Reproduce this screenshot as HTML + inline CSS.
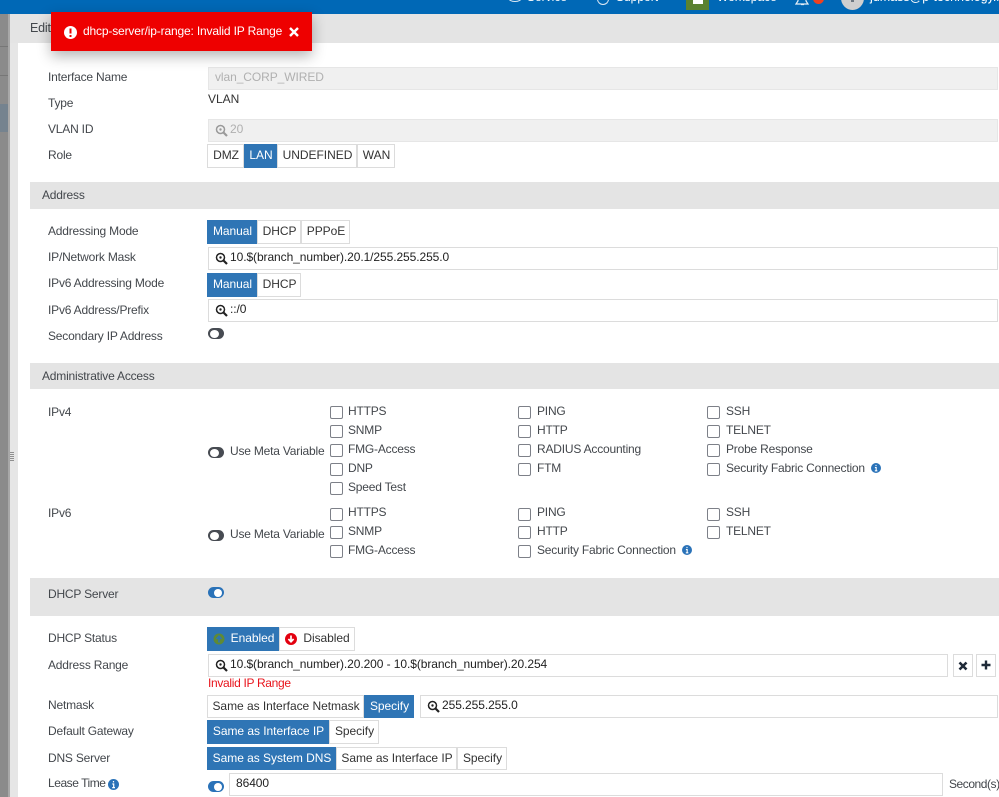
<!DOCTYPE html>
<html lang="en"><head><meta charset="utf-8"><title>Edit Interface</title>
<style>
html,body{margin:0;padding:0;background:#fff}
body{width:999px;height:797px;position:relative;overflow:hidden;font-family:"Liberation Sans",sans-serif;font-size:12px;color:#3c3f44}
div,span,svg{position:absolute;box-sizing:border-box}
.t{height:16px;line-height:16px;white-space:nowrap;letter-spacing:-.2px;color:#43474c}
.bar{left:30px;width:969px;background:#e4e4e4}
.in{border:1px solid #dcdcdc;background:#fff;height:23px;line-height:19px;white-space:nowrap;color:#222;padding-left:21px;letter-spacing:-.08px}
.in.d{background:#f0f0f0;border-color:#e6e6e6;color:#b0b0b0}
.b{height:24px;line-height:21px;text-align:center;border:1px solid #dcdcdc;background:#fff;color:#333;white-space:nowrap;padding-left:1px;letter-spacing:-.04px}
.b.on{background:#2f75b5;border-color:#2f75b5;color:#fff}
.c{width:13px;height:13px;border:1px solid #7d8088;border-radius:2px;background:#fff}
.tg{width:16px;height:11px;border-radius:6px;background:#474b52}
.tg:after{content:"";position:absolute;left:2px;top:1.5px;width:9px;height:8px;border-radius:50%;background:#fff}
.tg.on{background:#2a72b8}
.tg.on:after{left:6px;width:8px}
.m{left:6px;top:4px;width:13px;height:13px}
</style></head><body>
<svg width="0" height="0" style="position:absolute"><defs><symbol id="s" viewBox="0 0 13 13"><circle cx="5.5" cy="5.5" r="4" fill="none" stroke="currentColor" stroke-width="1.5"/><path d="M8.5 8.5L12 12" stroke="currentColor" stroke-width="2.2"/><circle cx="5.5" cy="5.5" r="1.2" fill="currentColor"/></symbol></defs></svg>

<!-- background app -->
<div style="left:0;top:14px;width:9px;height:783px;background:#8b8b8b"></div>
<div style="left:0;top:46px;width:9px;height:1px;background:#777"></div>
<div style="left:0;top:75px;width:9px;height:1px;background:#777"></div>
<div style="left:0;top:104px;width:9px;height:28px;background:#75838f"></div>
<div style="left:8px;top:14px;width:2px;height:783px;background:#a8a8a8"></div>
<div style="left:10px;top:14px;width:8px;height:783px;background:#e6e6e6"></div>
<div style="left:10px;top:452px;width:4px;height:10px;background:repeating-linear-gradient(#8f8f8f 0 1px,#e6e6e6 1px 2px)"></div>
<div style="left:18px;top:43px;width:981px;height:754px;background:#fff"></div>
<div style="left:10px;top:14px;width:989px;height:29px;background:#e4e4e4"></div>
<div class="t" style="left:30px;top:20px;font-size:12.5px">Edit</div>

<!-- top bar -->
<div style="left:0;top:0;width:999px;height:14px;background:#0068b6;overflow:hidden;color:#fff">
  <div style="left:508px;top:-6px;width:14px;height:8px;border:1.5px solid #dfeaf5;border-radius:50%"></div>
  <div style="left:527px;top:-10px;color:#fff;white-space:nowrap;line-height:14px">Service</div>
  <div style="left:597px;top:-7px;width:12px;height:12px;border:1.5px solid #dfeaf5;border-top:0;border-radius:50%"></div>
  <div style="left:616px;top:-10px;color:#fff;white-space:nowrap;line-height:14px">Support</div>
  <div style="left:686px;top:0;width:23px;height:10px;background:#5b8230"></div>
  <div style="left:693px;top:0;width:10px;height:4px;background:#fff"></div>
  <div style="left:717px;top:-10px;color:#fff;white-space:nowrap;line-height:14px">Workspace</div>
  <svg style="left:795px;top:-3px" width="15" height="9" viewBox="0 0 15 9"><path d="M3 0V4L1 7H13L11 4V0M6 7.5H9" fill="none" stroke="#e6eff7" stroke-width="1.2"/></svg>
  <div style="left:813px;top:-7px;width:11px;height:11px;border-radius:50%;background:#f0411f"></div>
  <div style="left:841px;top:-14px;width:23px;height:24px;border-radius:50%;background:#cfcfcf"></div>
  <div style="left:851px;top:0;width:3px;height:2px;background:#6d7781"></div>
  <div style="left:870px;top:-10px;color:#fff;white-space:nowrap;line-height:14px;font-size:12.5px">jdmass@p-tecnnology.net</div>
</div>

<!-- section bars -->
<div class="bar" style="top:182px;height:27px"></div>
<div class="bar" style="top:363px;height:26px"></div>
<div class="bar" style="top:578px;height:38px"></div>
<div class="t" style="left:42px;top:187px">Address</div>
<div class="t" style="left:42px;top:368px">Administrative Access</div>

<!-- labels -->
<div class="t" style="left:48px;top:69px">Interface Name</div>
<div class="t" style="left:48px;top:95px">Type</div>
<div class="t" style="left:48px;top:121px">VLAN ID</div>
<div class="t" style="left:48px;top:147px">Role</div>
<div class="t" style="left:48px;top:223px">Addressing Mode</div>
<div class="t" style="left:48px;top:249px">IP/Network Mask</div>
<div class="t" style="left:48px;top:275px">IPv6 Addressing Mode</div>
<div class="t" style="left:48px;top:302px">IPv6 Address/Prefix</div>
<div class="t" style="left:48px;top:328px">Secondary IP Address</div>
<div class="t" style="left:48px;top:404px">IPv4</div>
<div class="t" style="left:48px;top:505px">IPv6</div>
<div class="t" style="left:48px;top:586px">DHCP Server</div>
<div class="t" style="left:48px;top:630px">DHCP Status</div>
<div class="t" style="left:48px;top:657px">Address Range</div>
<div class="t" style="left:48px;top:697px">Netmask</div>
<div class="t" style="left:48px;top:723px">Default Gateway</div>
<div class="t" style="left:48px;top:750px">DNS Server</div>
<div class="t" style="left:48px;top:775px;letter-spacing:-.45px">Lease Time</div>
<svg style="left:108px;top:779px" width="11" height="11" viewBox="0 0 11 11"><circle cx="5.5" cy="5.5" r="5.5" fill="#2a72b8"/><path d="M5.5 2v1.4M4.3 5H5.7V8.5M4.2 8.6H7" stroke="#fff" stroke-width="1.2" fill="none"/></svg>

<!-- general -->
<div class="in d" style="left:208px;top:67px;width:790px;padding-left:6px">vlan_CORP_WIRED</div>
<div style="left:208px;top:91px;line-height:16px;color:#333">VLAN</div>
<div class="in d" style="left:208px;top:119px;width:790px"><svg class="m" style="color:#9a9a9a"><use href="#s"/></svg>20</div>
<div class="b" style="left:207px;top:144px;width:37px">DMZ</div>
<div class="b on" style="left:244px;top:144px;width:33px">LAN</div>
<div class="b" style="left:277px;top:144px;width:80px">UNDEFINED</div>
<div class="b" style="left:357px;top:144px;width:38px">WAN</div>

<!-- address -->
<div class="b on" style="left:207px;top:220px;width:50px">Manual</div>
<div class="b" style="left:257px;top:220px;width:44px">DHCP</div>
<div class="b" style="left:301px;top:220px;width:49px">PPPoE</div>
<div class="in" style="left:208px;top:247px;width:790px"><svg class="m"><use href="#s"/></svg>10.$(branch_number).20.1/255.255.255.0</div>
<div class="b on" style="left:207px;top:273px;width:50px">Manual</div>
<div class="b" style="left:257px;top:273px;width:44px">DHCP</div>
<div class="in" style="left:208px;top:299px;width:790px"><svg class="m"><use href="#s"/></svg>::/0</div>
<div class="tg" style="left:208px;top:328px"></div>

<!-- admin access IPv4 -->
<div class="tg" style="left:208px;top:447px"></div>
<div class="t" style="left:230px;top:443px">Use Meta Variable</div>
<div class="c" style="left:330px;top:406px"></div><div class="t" style="left:348px;top:403px">HTTPS</div>
<div class="c" style="left:330px;top:425px"></div><div class="t" style="left:348px;top:422px">SNMP</div>
<div class="c" style="left:330px;top:444px"></div><div class="t" style="left:348px;top:441px">FMG-Access</div>
<div class="c" style="left:330px;top:463px"></div><div class="t" style="left:348px;top:460px">DNP</div>
<div class="c" style="left:330px;top:482px"></div><div class="t" style="left:348px;top:479px">Speed Test</div>
<div class="c" style="left:518px;top:406px"></div><div class="t" style="left:537px;top:403px">PING</div>
<div class="c" style="left:518px;top:425px"></div><div class="t" style="left:537px;top:422px">HTTP</div>
<div class="c" style="left:518px;top:444px"></div><div class="t" style="left:537px;top:441px">RADIUS Accounting</div>
<div class="c" style="left:518px;top:463px"></div><div class="t" style="left:537px;top:460px">FTM</div>
<div class="c" style="left:707px;top:406px"></div><div class="t" style="left:726px;top:403px">SSH</div>
<div class="c" style="left:707px;top:425px"></div><div class="t" style="left:726px;top:422px">TELNET</div>
<div class="c" style="left:707px;top:444px"></div><div class="t" style="left:726px;top:441px">Probe Response</div>
<div class="c" style="left:707px;top:463px"></div><div class="t" style="left:726px;top:460px">Security Fabric Connection</div>
<svg style="left:871px;top:463px" width="10" height="10" viewBox="0 0 11 11"><circle cx="5.5" cy="5.5" r="5.5" fill="#2a72b8"/><path d="M5.5 2v1.4M4.3 5H5.7V8.5M4.2 8.6H7" stroke="#fff" stroke-width="1.2" fill="none"/></svg>

<!-- admin access IPv6 -->
<div class="tg" style="left:208px;top:530px"></div>
<div class="t" style="left:230px;top:526px">Use Meta Variable</div>
<div class="c" style="left:330px;top:508px"></div><div class="t" style="left:348px;top:504px">HTTPS</div>
<div class="c" style="left:330px;top:526px"></div><div class="t" style="left:348px;top:523px">SNMP</div>
<div class="c" style="left:330px;top:545px"></div><div class="t" style="left:348px;top:542px">FMG-Access</div>
<div class="c" style="left:518px;top:508px"></div><div class="t" style="left:537px;top:504px">PING</div>
<div class="c" style="left:518px;top:526px"></div><div class="t" style="left:537px;top:523px">HTTP</div>
<div class="c" style="left:518px;top:545px"></div><div class="t" style="left:537px;top:542px">Security Fabric Connection</div>
<svg style="left:682px;top:545px" width="10" height="10" viewBox="0 0 11 11"><circle cx="5.5" cy="5.5" r="5.5" fill="#2a72b8"/><path d="M5.5 2v1.4M4.3 5H5.7V8.5M4.2 8.6H7" stroke="#fff" stroke-width="1.2" fill="none"/></svg>
<div class="c" style="left:707px;top:508px"></div><div class="t" style="left:726px;top:504px">SSH</div>
<div class="c" style="left:707px;top:526px"></div><div class="t" style="left:726px;top:523px">TELNET</div>

<!-- dhcp -->
<div class="tg on" style="left:208px;top:587px"></div>
<div class="b on" style="left:207px;top:627px;width:72px;padding-left:19px">Enabled</div>
<svg style="left:213px;top:633px" width="12" height="12" viewBox="0 0 12 12"><circle cx="6" cy="6" r="5.5" fill="#5f8a35"/><path d="M6 9.5V4M3.5 6L6 3.2 8.5 6" stroke="#2f75b5" stroke-width="1.6" fill="none"/></svg>
<div class="b" style="left:279px;top:627px;width:76px;padding-left:19px">Disabled</div>
<svg style="left:285px;top:633px" width="12" height="12" viewBox="0 0 12 12"><circle cx="6" cy="6" r="6" fill="#e3000f"/><path d="M6 2.5V8M3.4 6L6 8.8 8.6 6" stroke="#fff" stroke-width="1.7" fill="none"/></svg>
<div class="in" style="left:208px;top:654px;width:740px"><svg class="m"><use href="#s"/></svg>10.$(branch_number).20.200 - 10.$(branch_number).20.254</div>
<div class="in" style="left:953px;top:654px;width:20px;padding:0"><svg style="left:4px;top:6px" width="10" height="10" viewBox="0 0 10 10"><path d="M1.5 1.5L8.5 8.5M8.5 1.5L1.5 8.5" stroke="#1f2a38" stroke-width="2.6"/></svg></div>
<div class="in" style="left:976px;top:654px;width:20px;padding:0"><svg style="left:4px;top:5px" width="10" height="10" viewBox="0 0 10 10"><path d="M5 .5V9.5M.5 5H9.5" stroke="#1f2a38" stroke-width="2.4"/></svg></div>
<div class="t" style="left:208px;top:675px;color:#e8141c;letter-spacing:-.32px">Invalid IP Range</div>
<div class="b" style="left:207px;top:695px;width:157px;height:23px">Same as Interface Netmask</div>
<div class="b on" style="left:364px;top:695px;width:50px;height:23px">Specify</div>
<div class="in" style="left:420px;top:695px;width:578px"><svg class="m"><use href="#s"/></svg>255.255.255.0</div>
<div class="b on" style="left:207px;top:720px;width:122px">Same as Interface IP</div>
<div class="b" style="left:329px;top:720px;width:50px">Specify</div>
<div class="b on" style="left:207px;top:747px;width:129px;height:23px">Same as System DNS</div>
<div class="b" style="left:336px;top:747px;width:121px;height:23px">Same as Interface IP</div>
<div class="b" style="left:457px;top:747px;width:50px;height:23px">Specify</div>
<div class="tg on" style="left:208px;top:781px"></div>
<div class="in" style="left:229px;top:773px;width:714px;padding-left:6px">86400</div>
<div class="t" style="left:949px;top:776px;letter-spacing:-.45px">Second(s)</div>

<!-- toast -->
<div style="left:51px;top:12px;width:261px;height:39px;background:#ee0000;box-shadow:0 5px 14px rgba(0,0,0,.3)">
  <svg style="left:13px;top:14px" width="13" height="13" viewBox="0 0 13 13"><circle cx="6.5" cy="6.5" r="6.5" fill="#fff"/><path d="M6.5 2.5V7.5M6.5 9V11" stroke="#ee0000" stroke-width="2"/></svg>
  <div style="left:32px;top:11px;height:16px;line-height:16px;color:#fff;white-space:nowrap;letter-spacing:-.16px">dhcp-server/ip-range: Invalid IP Range</div>
  <svg style="left:238px;top:15px" width="10" height="10" viewBox="0 0 10 10"><path d="M1 1L9 9M9 1L1 9" stroke="#fff" stroke-width="2.4"/></svg>
</div>
</body></html>
